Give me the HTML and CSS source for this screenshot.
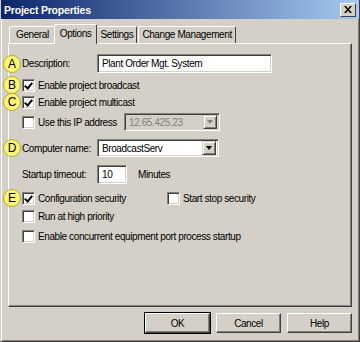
FILE: index.html
```html
<!DOCTYPE html>
<html lang="en">

<head>
    <link rel="stylesheet" href="styles.css">
</head>

<body>
    <div class="window">
        <div class="titlebar">
            <span class="title">Project Properties</span>
            <span class="close">
                <svg width="8" height="7" viewBox="0 0 8 7"><path d="M0 0h2l2 2.5L6 0h2L5 3.5 8 7H6L4 4.5 2 7H0l3-3.5z" fill="#000"/></svg>
            </span>
        </div>

        <div class="tabs">
            <div class="tab tab-general">General</div>
            <div class="tab tab-active">Options</div>
            <div class="tab">Settings</div>
            <div class="tab">Change Management</div>
        </div>

        <div class="panel">
            <div class="row row-desc">
                <span class="badge">A</span>
                <span class="label label-wide">Description:</span>
                <div class="textbox textbox-desc">Plant Order Mgt. System</div>
            </div>

            <div class="row row-b">
                <span class="badge">B</span>
                <span class="check checked"></span>
                <span class="label">Enable project broadcast</span>
            </div>

            <div class="row row-c">
                <span class="badge">C</span>
                <span class="check checked"></span>
                <span class="label">Enable project multicast</span>
            </div>

            <div class="row row-ip">
                <span class="check"></span>
                <span class="label label-ip">Use this IP address</span>
                <div class="combo combo-disabled">
                    <span class="combo-text">12.65.425.23</span>
                    <span class="combo-btn"><i class="arrow"></i></span>
                </div>
            </div>

            <div class="row row-d">
                <span class="badge">D</span>
                <span class="label label-wide">Computer name:</span>
                <div class="combo combo-name">
                    <span class="combo-text">BroadcastServ</span>
                    <span class="combo-btn"><i class="arrow"></i></span>
                </div>
            </div>

            <div class="row row-timeout">
                <span class="label label-wide">Startup timeout:</span>
                <div class="textbox textbox-num">10</div>
                <span class="label label-min">Minutes</span>
            </div>

            <div class="row row-e">
                <span class="badge">E</span>
                <span class="check checked"></span>
                <span class="label label-config">Configuration security</span>
                <span class="check"></span>
                <span class="label">Start stop security</span>
            </div>

            <div class="row row-run">
                <span class="check"></span>
                <span class="label">Run at high priority</span>
            </div>

            <div class="row row-conc">
                <span class="check"></span>
                <span class="label">Enable concurrent equipment port process startup</span>
            </div>
        </div>

        <div class="buttons">
            <button class="btn btn-default">OK</button>
            <button class="btn">Cancel</button>
            <button class="btn">Help</button>
        </div>
    </div>
</body>

</html>
```

FILE: styles.css
```css
body {
    margin: 0;
    padding: 0;
    background: #d4d0c8;
    font-family: "Liberation Sans", Arial, sans-serif;
    font-size: 10px;
    letter-spacing: -0.4px;
    color: #000;
}

.window {
    width: 360px;
    height: 342px;
    box-sizing: border-box;
    border-left: 1px solid #d4d0c8;
    border-right: 1px solid #404040;
    border-bottom: 1px solid #404040;
    box-shadow: inset 1px 0 0 #fff, inset -1px -1px 0 #808080;
    background: #d4d0c8;
    overflow: hidden;
}

.titlebar {
    height: 19px;
    margin-left: -1px;
    margin-right: -1px;
    background: linear-gradient(to right, #0a246a, #a6caf0);
    display: flex;
    align-items: center;
    justify-content: space-between;
    padding: 0 4px 0 4px;
}

.title {
    color: #fff;
    font-weight: bold;
    font-size: 10.5px;
    letter-spacing: -0.2px;
}

.close {
    width: 14px;
    height: 12px;
    background: #d4d0c8;
    border-top: 1px solid #fff;
    border-left: 1px solid #fff;
    border-right: 1px solid #404040;
    border-bottom: 1px solid #404040;
    display: flex;
    align-items: center;
    justify-content: center;
}

.tabs {
    display: flex;
    align-items: flex-end;
    height: 24px;
    padding-left: 8px;
}

.tab {
    height: 16px;
    line-height: 16px;
    padding: 0 3px;
    border-top: 1px solid #fff;
    border-left: 1px solid #fff;
    border-right: 1px solid #404040;
    border-top-left-radius: 2px;
    border-top-right-radius: 2px;
    margin-right: 1px;
}

.tab-general {
    padding: 0 5px 0 6px;
}

.tab-active {
    height: 19px;
    line-height: 17px;
    padding: 0 5px;
    margin-left: -2px;
    margin-right: -1px;
    margin-bottom: -1px;
    background: #d4d0c8;
    position: relative;
    z-index: 1;
}

.panel {
    margin: 0 7px 0 7px;
    height: 264px;
    box-sizing: border-box;
    border-top: 1px solid #fff;
    border-left: 1px solid #fff;
    border-right: 1px solid #404040;
    border-bottom: 1px solid #404040;
    box-shadow: inset -1px -1px 0 #808080;
    padding: 0 0 0 13px;
}

.row {
    display: flex;
    align-items: center;
    position: relative;
    height: 16px;
}

.badge {
    position: absolute;
    left: -19px;
    top: 50%;
    margin-top: -9px;
    width: 16px;
    height: 16px;
    border-radius: 50%;
    background: #fcf477;
    border: 1px solid #b8a82c;
    font-size: 12px;
    letter-spacing: 0;
    line-height: 16px;
    text-align: center;
    color: #000;
    z-index: 2;
}

.row-desc {
    height: 19px;
    margin-top: 10px;
}

.row-b {
    margin-top: 4px;
}

.row-c {
    margin-top: 1px;
}

.row-ip {
    height: 18px;
    margin-top: 3px;
}

.row-d {
    height: 18px;
    margin-top: 8px;
}

.row-timeout {
    height: 18px;
    margin-top: 8px;
}

.row-e {
    margin-top: 7px;
}

.row-run {
    margin-top: 2px;
}

.row-conc {
    margin-top: 4px;
}

.label {
    white-space: nowrap;
}

.label-wide {
    width: 75px;
}

.label-ip {
    width: 86px;
}

.label-config {
    width: 129px;
}

.label-min {
    margin-left: 11px;
}

.check {
    width: 13px;
    height: 13px;
    box-sizing: border-box;
    background: #fff;
    border-top: 1px solid #808080;
    border-left: 1px solid #808080;
    border-right: 1px solid #fff;
    border-bottom: 1px solid #fff;
    box-shadow: inset 1px 1px 0 #404040, inset -1px -1px 0 #d4d0c8;
    margin-right: 3px;
    position: relative;
    flex-shrink: 0;
}

.checked::after {
    content: "";
    position: absolute;
    left: 3px;
    top: 1px;
    width: 3px;
    height: 6px;
    border-right: 2px solid #000;
    border-bottom: 2px solid #000;
    transform: rotate(40deg);
}

.textbox,
.combo {
    box-sizing: border-box;
    height: 19px;
    background: #fff;
    border-top: 1px solid #808080;
    border-left: 1px solid #808080;
    border-right: 1px solid #fff;
    border-bottom: 1px solid #fff;
    box-shadow: inset 1px 1px 0 #404040, inset -1px -1px 0 #d4d0c8;
    padding-left: 4px;
    line-height: 17px;
}

.textbox-desc {
    width: 175px;
}

.textbox-num {
    width: 30px;
}

.combo {
    display: flex;
    justify-content: space-between;
    align-items: center;
    padding-right: 2px;
    height: 18px;
}

.combo-name {
    width: 122px;
}

.combo-disabled {
    width: 96px;
    background: #d4d0c8;
    color: #808080;
}

.combo-btn {
    width: 14px;
    height: 14px;
    box-sizing: border-box;
    background: #d4d0c8;
    border-top: 1px solid #d4d0c8;
    border-left: 1px solid #d4d0c8;
    border-right: 1px solid #404040;
    border-bottom: 1px solid #404040;
    box-shadow: inset 1px 1px 0 #fff, inset -1px -1px 0 #808080;
    display: flex;
    align-items: center;
    justify-content: center;
}

.arrow {
    width: 0;
    height: 0;
    border-left: 3.5px solid transparent;
    border-right: 3.5px solid transparent;
    border-top: 4px solid #000;
}

.combo-disabled .arrow {
    border-top-color: #808080;
}

.buttons {
    display: flex;
    justify-content: flex-end;
    gap: 6px;
    padding: 6px 7px 0 0;
}

button {
    width: 65px;
    height: 20px;
    background: #d4d0c8;
    font-family: "Liberation Sans", Arial, sans-serif;
    font-size: 10px;
    letter-spacing: -0.4px;
    color: #000;
    border-top: 1px solid #fff;
    border-left: 1px solid #fff;
    border-right: 1px solid #404040;
    border-bottom: 1px solid #404040;
    box-shadow: inset -1px -1px 0 #808080;
    padding: 0;
}

.btn-default {
    outline: 1px solid #000;
    outline-offset: 0;
}
```
